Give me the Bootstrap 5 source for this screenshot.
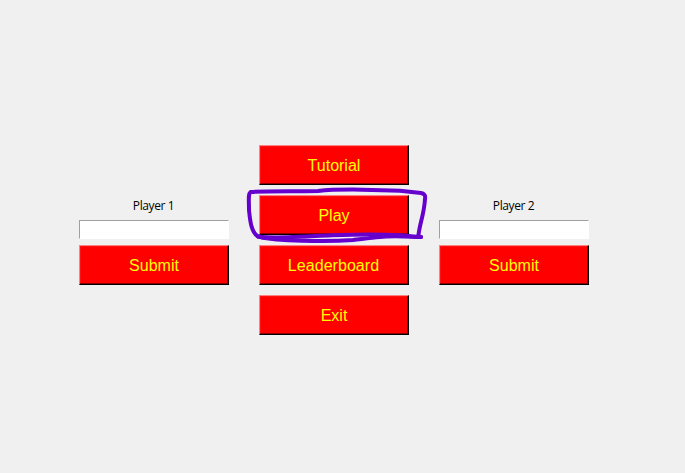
<!DOCTYPE html>
<html lang="en">
<head>
<meta charset="utf-8">
<meta name="viewport" content="width=device-width, initial-scale=1">
<title>Game menu</title>
<link href="https://cdn.jsdelivr.net/npm/bootstrap@5.3.0/dist/css/bootstrap.min.css" rel="stylesheet">
<style>
body { background: #f0f0f0; height: 473px; overflow: hidden; }
.menu { gap: 30px; padding: 145px 0 0 79px; }
.stack { width: 150px; }
.main-stack { gap: 10px; }
.side-stack { padding-top: 50px; }
.game-btn {
  --bs-btn-border-radius: 0;
  width: 150px; height: 40px; padding: 1px 0 0;
  background: #f00; color: #ff0;
  border: 1px solid; border-color: #ff8080 #000 #000 #ff8080;
  box-shadow: inset -1px -1px #900000, inset 1px 1px #ff1010;
  font: 16px/38px "Liberation Sans", Arial, sans-serif;
}
.game-btn:hover, .game-btn:active { background: #f00 !important; color: #ff0 !important; }
.wide-text { padding-right: 1px; letter-spacing: .05px; }
.player-label { height: 20px; margin: 0 0 5px; font: 12px/21px "Open Sans", "Noto Sans", sans-serif; letter-spacing: -.4px; color: #000; padding-right: 1px; }
.player-input {
  height: 19px; min-height: 0; padding: 0 2px; margin-bottom: 6px; border-radius: 0; background: #fff;
  border: 1px solid; border-color: #a0a0a0 #fff #fff #a0a0a0; font: 12px "Open Sans", sans-serif;
}
.ink { left: 240px; top: 180px; }
</style>
</head>
<body class="position-relative">
<main class="menu d-flex align-items-start">
  <section class="stack side-stack d-flex flex-column">
    <label class="player-label text-center" for="p1">Player 1</label>
    <input id="p1" class="player-input form-control" type="text">
    <button class="game-btn btn" type="button">Submit</button>
  </section>
  <nav class="stack main-stack d-flex flex-column">
    <button class="game-btn btn" type="button">Tutorial</button>
    <button class="game-btn btn" type="button">Play</button>
    <button class="game-btn wide-text btn" type="button">Leaderboard</button>
    <button class="game-btn btn" type="button">Exit</button>
  </nav>
  <section class="stack side-stack d-flex flex-column">
    <label class="player-label text-center" for="p2">Player 2</label>
    <input id="p2" class="player-input form-control" type="text">
    <button class="game-btn btn" type="button">Submit</button>
  </section>
</main>
<!-- hand-drawn loop around Play -->
<svg class="ink position-absolute pe-none" width="200" height="70" viewBox="0 0 200 70" fill="none" stroke="#6600cc" stroke-width="4" stroke-linecap="round" stroke-linejoin="round">
  <path d="M181 57 C174 57 168 55.800 160 55.200 C145 54.500 110 54.700 92 55.200 C75 56 62 57 48 57.300 C35 57.500 22 57.500 18 56.500 C11 52 10 40 9 30 C9 21 8 14 10.500 12 C28 10.500 60 11.500 78 11 C100 8.500 145 10 160 10.800 L181 13 Q186 14 185 19 C184 35 180 42 178.500 55"/>
  <path d="M18 56.500 C28 59 45 60.500 62 60.700 C80 61.300 100 61 113 60 C122 59 130 58 140 57 C152 55.500 165 56.500 181 57"/>
  <path d="M22 57.500 L46 59"/>
</svg>
<script src="https://cdn.jsdelivr.net/npm/bootstrap@5.3.0/dist/js/bootstrap.bundle.min.js"></script>
</body>
</html>
